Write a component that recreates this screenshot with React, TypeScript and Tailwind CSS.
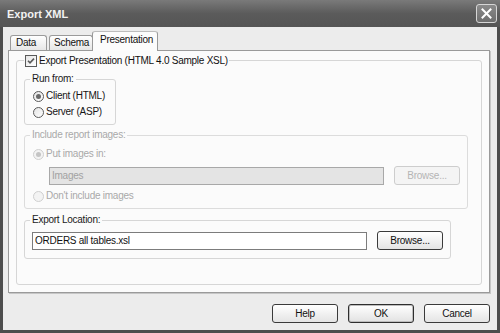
import React from "react";

function Radio({ checked, disabled, label }: { checked?: boolean; disabled?: boolean; label: string }) {
  return (
    <div className="flex items-center h-[16px] gap-[2px]">
      <span
        className={
          disabled
            ? "w-[11px] h-[11px] rounded-full border border-[#cfcfcf] bg-[#f3f3f3] flex items-center justify-center"
            : "w-[11px] h-[11px] rounded-full border border-[#5a5a5a] bg-gradient-to-br from-[#e4e4e4] to-white flex items-center justify-center"
        }
      >
        {checked && (
          <span className={disabled ? "w-[5px] h-[5px] rounded-full bg-[#c4c4c4]" : "w-[5px] h-[5px] rounded-full bg-[#6a6a6a]"} />
        )}
      </span>
      <span className={disabled ? "text-[#a9a9a9]" : "text-[#161616]"}>{label}</span>
    </div>
  );
}

function Button({ label, disabled, def }: { label: string; disabled?: boolean; def?: boolean }) {
  if (disabled) {
    return (
      <div className="w-[66px] h-[19px] rounded-[3px] border border-[#cdcdcd] bg-[#f4f4f4] flex items-center justify-center text-[#b4b4b4]">
        {label}
      </div>
    );
  }
  return (
    <div
      className={
        def
          ? "w-[66px] h-[19px] rounded-[3px] border border-[#2e2e2e] bg-gradient-to-b from-white to-[#e2e2e2] shadow-[inset_0_0_0_1px_#bdbdbd] flex items-center justify-center text-[#111]"
          : "w-[66px] h-[19px] rounded-[3px] border border-[#3a3a3a] bg-gradient-to-b from-white to-[#e4e4e4] flex items-center justify-center text-[#111]"
      }
    >
      {label}
    </div>
  );
}

export default function App() {
  return (
    <div className="w-[500px] h-[333px] flex flex-col bg-[#4d4d4d] font-['Liberation_Sans',Arial,sans-serif] text-[10px] tracking-[-0.25px] leading-[12px] select-none">
      {/* Title bar */}
      <div className="h-[27px] flex items-center justify-between pl-[7px] pr-[3px] bg-gradient-to-b from-[#7a7a7a] via-[#5b5b5b] to-[#555555]">
        <span className="text-[#f2f2f2] font-bold text-[11px] tracking-normal">Export XML</span>
        <div className="w-[21px] h-[19px] rounded-[3px] border border-[#d6d6d6] bg-gradient-to-b from-[#8a8a8a] to-[#6e6e6e] flex items-center justify-center">
          <svg width="11" height="11" viewBox="0 0 11 11">
            <path d="M1.5 1.5 L9.5 9.5 M9.5 1.5 L1.5 9.5" stroke="#ffffff" strokeWidth="2" strokeLinecap="square" />
          </svg>
        </div>
      </div>

      {/* Body */}
      <div className="flex-1 mx-[3px] mb-[3px] bg-[#ececec] flex flex-col">
        {/* Tabs */}
        <div className="h-[23px] pl-[7px] flex items-end relative z-10">
          <div className="h-[15px] w-[37px] mb-0 rounded-t-[3px] border border-b-0 border-[#9a9a9a] bg-gradient-to-b from-white to-[#e6e6e6] flex items-center pl-[5px] text-[#111]">
            Data
          </div>
          <div className="h-[15px] w-[44px] ml-[2px] rounded-t-[3px] border border-b-0 border-[#9a9a9a] bg-gradient-to-b from-white to-[#e6e6e6] flex items-center pl-[4px] text-[#111]">
            Schema
          </div>
          <div className="h-[20px] w-[66px] -ml-[1px] -mb-[1px] rounded-t-[3px] border border-b-0 border-[#9a9a9a] border-t-[#bdbdbd] bg-[#fcfcfc] flex items-start pt-[2px] pl-[7px] text-[#111]">
            Presentation
          </div>
        </div>

        {/* Panel */}
        <div className="ml-[5px] w-[482px] h-[243px] border border-[#9a9a9a] bg-[#fbfbfb] shadow-[1px_1px_0_#c6c6c6] pt-[3px] pl-[7px]">
          <fieldset className="w-[466px] h-[231px] border border-[#d6d6d6] rounded-[3px] pl-[7px] pt-[6px]">
            <legend className="px-[1px]">
              <div className="flex items-center gap-[2px] h-[13px]">
                <span className="w-[12px] h-[12px] border border-[#5a5a5a] bg-gradient-to-br from-[#e6e6e6] to-white flex items-center justify-center">
                  <svg width="8" height="8" viewBox="0 0 8 8">
                    <path d="M1 3.8 L3 5.8 L7 1.6" stroke="#5a5a5a" strokeWidth="1.6" fill="none" />
                  </svg>
                </span>
                <span className="text-[#111]">Export Presentation (HTML 4.0 Sample XSL)</span>
              </div>
            </legend>

            <div className="flex flex-col">
              {/* Run from */}
              <fieldset className="w-[92px] border border-[#d6d6d6] rounded-[3px] pl-[5px] pt-[3px] pb-[4px]">
                <legend className="px-[2px] text-[#1a1a1a]">Run from:</legend>
                <div className="ml-[3px] flex flex-col">
                  <Radio checked label="Client (HTML)" />
                  <Radio label="Server (ASP)" />
                </div>
              </fieldset>

              {/* Include report images */}
              <fieldset className="w-[444px] mt-[4px] border border-[#dcdcdc] rounded-[3px] pl-[5px] pt-[5px] pb-[4px]">
                <legend className="px-[2px] text-[#a9a9a9]">Include report images:</legend>
                <div className="ml-[3px] flex flex-col">
                  <Radio checked disabled label="Put images in:" />
                  <div className="mt-[4px] ml-[16px] flex items-center gap-[10px]">
                    <div className="w-[335px] h-[18px] border border-[#a8a8a8] bg-[#e4e4e4] pl-[2px] flex items-center text-[#a2a2a2]">
                      Images
                    </div>
                    <Button label="Browse..." disabled />
                  </div>
                  <div className="mt-[3px]">
                    <Radio disabled label="Don't include images" />
                  </div>
                </div>
              </fieldset>

              {/* Export Location */}
              <fieldset className="w-[427px] mt-[5px] border border-[#d6d6d6] rounded-[3px] pl-[5px] pt-[5px] pb-[8px]">
                <legend className="px-[2px] text-[#1a1a1a]">Export Location:</legend>
                <div className="ml-[2px] flex items-center gap-[10px]">
                  <div className="w-[335px] h-[18px] border border-[#7c7c7c] bg-white pl-[2px] flex items-center text-[#111]">
                    ORDERS all tables.xsl
                  </div>
                  <Button label="Browse..." />
                </div>
              </fieldset>
            </div>
          </fieldset>
        </div>

        {/* Bottom buttons */}
        <div className="mt-[11px] pr-[7px] flex justify-end gap-[10px]">
          <Button label="Help" />
          <Button label="OK" def />
          <Button label="Cancel" />
        </div>
      </div>
    </div>
  );
}
